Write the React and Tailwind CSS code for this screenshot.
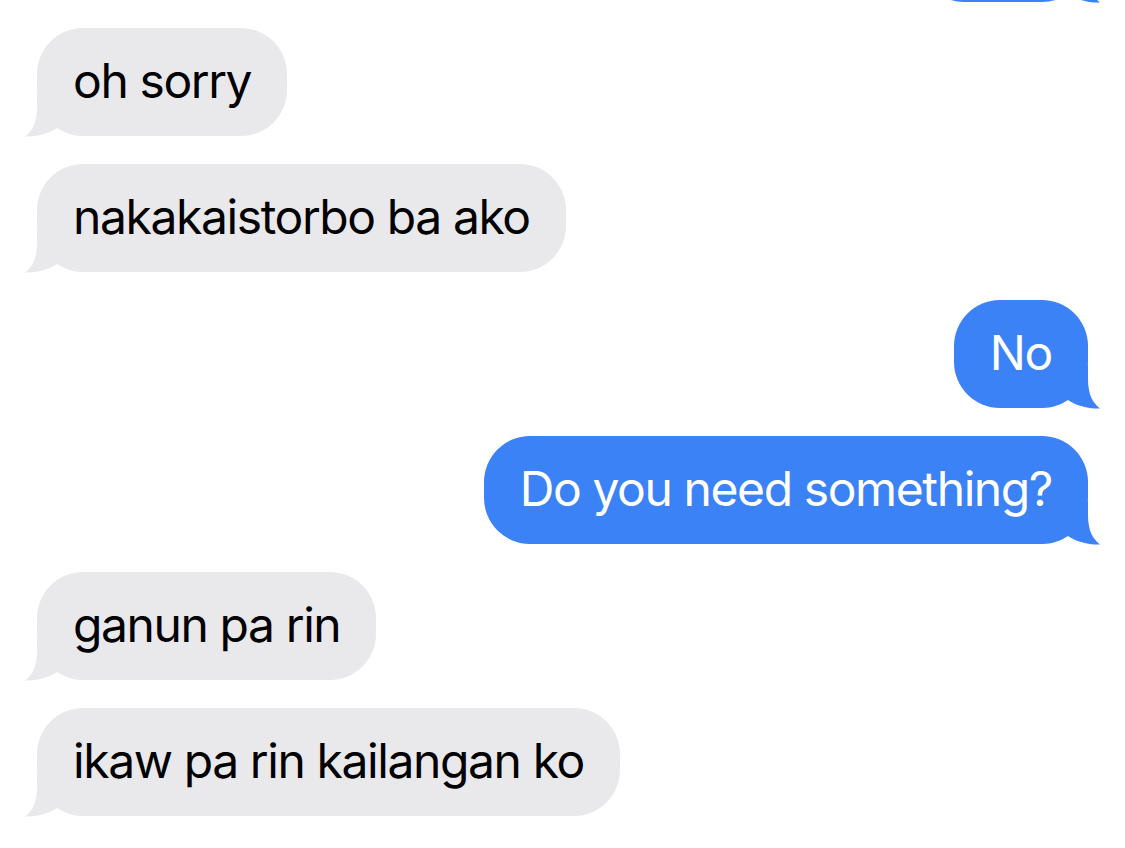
import React from 'react';

const GREY = "#e9e9eb";
const BLUE = "#3b82f7";

const messages = [
  { from: "them", text: "oh sorry" },
  { from: "them", text: "nakakaistorbo ba ako" },
  { from: "me", text: "No" },
  { from: "me", text: "Do you need something?" },
  { from: "them", text: "ganun pa rin" },
  { from: "them", text: "ikaw pa rin kailangan ko" },
];

// iMessage-style bubble tail, drawn for the left side; mirrored for the right
const Tail = ({ side, color }) => (
  <svg
    width="40"
    height="44"
    viewBox="0 0 40 44"
    className={side === "left" ? "absolute -left-[12px] -bottom-px" : "absolute -right-[12px] -bottom-px -scale-x-100"}
  >
    <path d="M12 0 L12 14 C12 30 7 38 0 43.5 C11 44 23 41 32 35 L33 0 Z" fill={color} />
  </svg>
);

const Bubble = ({ from, children }) => {
  const mine = from === "me";
  return (
    <div className={`flex ${mine ? "justify-end" : "justify-start"}`}>
      <div
        className={`relative h-[108px] flex items-center px-[36px] rounded-[46px] text-[48px] tracking-[-1.4px] ${mine ? "bg-[#3b82f7] text-white" : "bg-[#e9e9eb] text-black"}`}
      >
        <span className="relative z-10 leading-none pb-[2px]">{children}</span>
        <Tail side={mine ? "right" : "left"} color={mine ? BLUE : GREY} />
      </div>
    </div>
  );
};

export default function App() {
  return (
    <div
      className="w-[1125px] h-[848px] overflow-hidden bg-white"
      style={{ fontFamily: 'Inter, "Liberation Sans", sans-serif' }}
    >
      <div className="px-[37px]">
        {/* tail end of the previous outgoing message, cut off by the top edge */}
        <div className="flex justify-end -mt-[106px] mb-[26px]">
          <div className="relative h-[108px] w-[170px] rounded-[46px] bg-[#3b82f7]">
            <Tail side="right" color={BLUE} />
          </div>
        </div>
        <div className="flex flex-col gap-[28px]">
          {messages.map((m, i) => (
            <Bubble key={i} from={m.from}>{m.text}</Bubble>
          ))}
        </div>
      </div>
    </div>
  );
}
